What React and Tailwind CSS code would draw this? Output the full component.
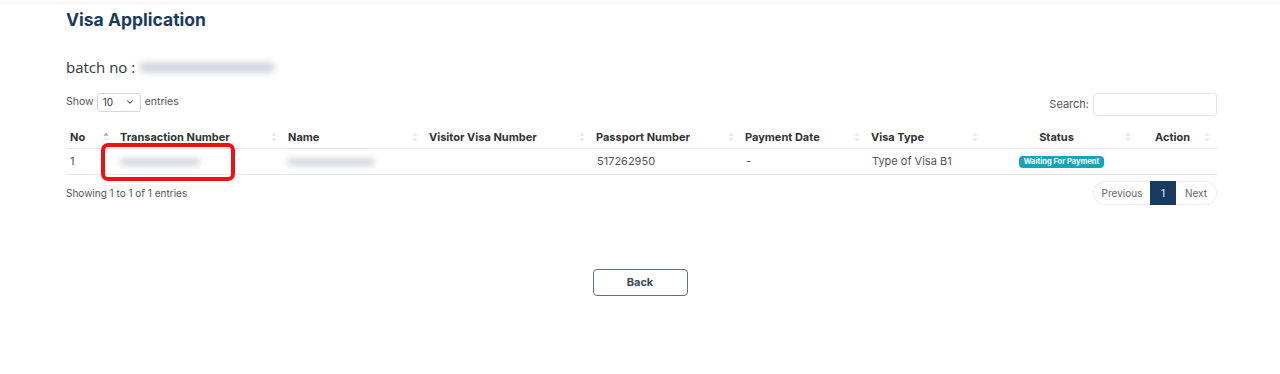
import React from "react";
import { ChevronDown } from "lucide-react";

const SortIcon = ({ active }) => (
  <svg width="6" height="10" viewBox="0 0 6 10" className="absolute right-[7px] top-1/2 -translate-y-1/2">
    <path d="M3 0.5 L5.5 3.8 H0.5 Z" fill={active ? "#9ca3af" : "#e5e7eb"} />
    <path d="M3 9.5 L5.5 6.2 H0.5 Z" fill="#e5e7eb" />
  </svg>
);

const columns = [
  { label: "No", w: "w-[50px]", active: true },
  { label: "Transaction Number", w: "w-[168px]" },
  { label: "Name", w: "w-[141px]" },
  { label: "Visitor Visa Number", w: "w-[167px]" },
  { label: "Passport Number", w: "w-[149px]" },
  { label: "Payment Date", w: "w-[126px]" },
  { label: "Visa Type", w: "w-[118px]" },
  { label: "Status", w: "w-[153px]", center: true },
  { label: "Action", w: "w-[79px]", center: true },
];

const Blur = ({ className }) => (
  <div className={`rounded-full bg-[#d3d7de] blur-[3px] ${className}`} />
);

export default function App() {
  return (
    <div className="relative min-h-[374px] w-full bg-white font-['Inter',sans-serif] text-[#555]">
      <div className="h-[2px] w-full shadow-[0_1px_3px_rgba(0,0,0,0.06)]" />
      <div className="pl-[66px] pr-[63px]">
        <h1 className="mt-[7px] text-[17.5px] font-bold leading-[22px] text-[#1c3a5e]">
          Visa Application
        </h1>

        <div className="mt-[26px] flex h-[20px] items-center">
          <span className="font-['Open_Sans',sans-serif] text-[15px] text-[#2f3640]">
            batch no :
          </span>
          <Blur className="ml-[4px] h-[11px] w-[136px]" />
        </div>

        <div className="mt-[11px] flex items-center justify-between">
          <div className="flex items-center text-[10.5px] text-[#555]">
            <span>Show</span>
            <div className="ml-[3px] mr-[4px] flex h-[19px] w-[44px] items-center justify-between rounded-[3px] border border-[#d4d7dc] pl-[5px] pr-[5px] text-[10px] text-[#333]">
              <span>10</span>
              <ChevronDown size={10} strokeWidth={2.5} className="text-[#444]" />
            </div>
            <span>entries</span>
          </div>
          <div className="mt-[5px] flex items-center text-[11px] text-[#555]">
            <span>Search:</span>
            <div className="ml-[4px] h-[23px] w-[124px] rounded-[4px] border border-[#e3e5e8]" />
          </div>
        </div>

        <div className="mt-[10px]">
          <div className="flex h-[23px] items-center border-b border-[#e5e7eb] text-[11px] font-bold text-[#333]">
            {columns.map((c) => (
              <div
                key={c.label}
                className={`relative flex h-full shrink-0 items-center pl-[4px] pr-[14px] ${c.w} ${c.center ? "justify-center" : ""}`}
              >
                {c.label}
                <SortIcon active={c.active} />
              </div>
            ))}
          </div>
          <div className="flex h-[26px] items-center border-b border-[#e5e7eb] text-[11px] text-[#555]">
            <div className="w-[50px] shrink-0 pl-[4px]">1</div>
            <div className="relative flex h-full w-[168px] shrink-0 items-center pl-[4px]">
              <Blur className="h-[8px] w-[80px]" />
              <div className="absolute left-[-15px] top-[-6px] h-[38px] w-[134px] rounded-[7px] border-[4px] border-[#ee1111]" />
            </div>
            <div className="flex w-[141px] shrink-0 items-center pl-[3px]">
              <Blur className="h-[8px] w-[88px]" />
            </div>
            <div className="w-[167px] shrink-0" />
            <div className="w-[149px] shrink-0 pl-[5px]">517262950</div>
            <div className="w-[126px] shrink-0 pl-[5px]">-</div>
            <div className="w-[118px] shrink-0 pl-[5px]">Type of Visa B1</div>
            <div className="flex w-[153px] shrink-0 justify-center">
              <span className="rounded-[4px] bg-[#1aa3b8] px-[5px] py-[1px] text-[7.5px] font-bold leading-[10px] text-white">
                Waiting For Payment
              </span>
            </div>
            <div className="w-[79px] shrink-0" />
          </div>
        </div>

        <div className="mt-[6px] flex items-center justify-between">
          <span className="text-[10px] text-[#555]">Showing 1 to 1 of 1 entries</span>
          <div className="flex h-[24px] items-stretch text-[10px]">
            <div className="flex w-[57px] items-center justify-center rounded-l-full border border-r-0 border-[#eceef1] text-[#666]">
              Previous
            </div>
            <div className="flex w-[26px] items-center justify-center bg-[#173a5e] text-white">1</div>
            <div className="flex w-[41px] items-center justify-center rounded-r-full border border-l-0 border-[#eceef1] text-[#666]">
              Next
            </div>
          </div>
        </div>

        <div className="mt-[64px] flex justify-center pr-[3px]">
          <button className="h-[27px] w-[95px] rounded-[4px] border border-[#5f6f80] text-[11px] font-bold text-[#3b4a5c]">
            Back
          </button>
        </div>
      </div>
    </div>
  );
}
